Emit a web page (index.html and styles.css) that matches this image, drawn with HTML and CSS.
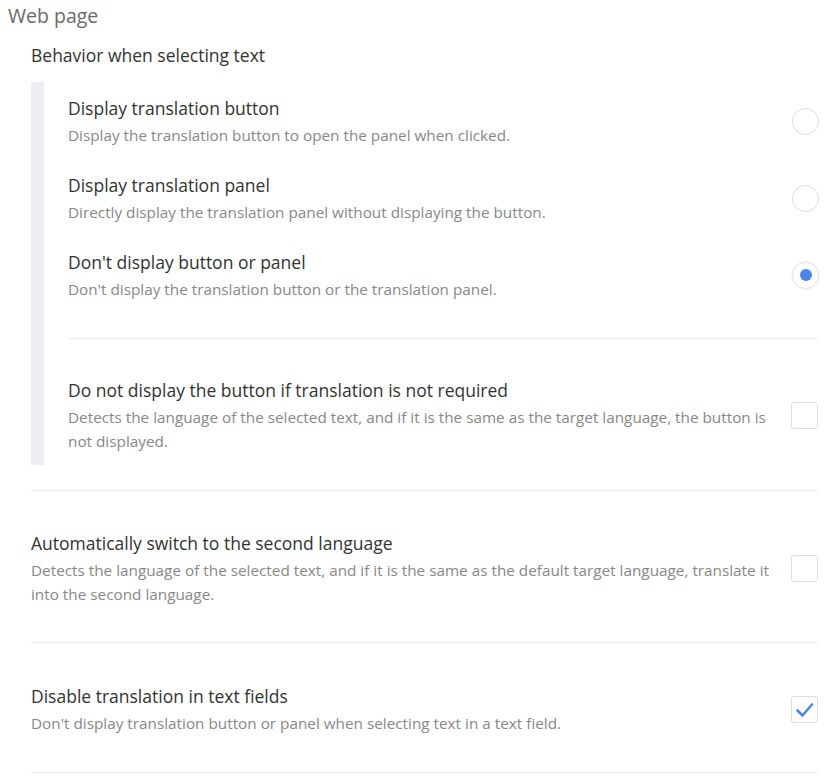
FILE: index.html
```html
<!DOCTYPE html>
<html>
<head>
<meta charset="utf-8">
<link rel="stylesheet" href="styles.css">
</head>
<body>
<div class="page">
  <h2 class="page-title">Web page</h2>
  <div class="group">
    <div class="group-title">Behavior when selecting text</div>
    <div class="sub">
      <div class="item">
        <div class="text">
          <div class="title">Display translation button</div>
          <div class="desc">Display the translation button to open the panel when clicked.</div>
        </div>
        <span class="radio"></span>
      </div>
      <div class="item">
        <div class="text">
          <div class="title">Display translation panel</div>
          <div class="desc">Directly display the translation panel without displaying the button.</div>
        </div>
        <span class="radio"></span>
      </div>
      <div class="item">
        <div class="text">
          <div class="title">Don't display button or panel</div>
          <div class="desc">Don't display the translation button or the translation panel.</div>
        </div>
        <span class="radio checked"></span>
      </div>
      <hr class="divider sub-divider">
      <div class="item item-check">
        <div class="text">
          <div class="title">Do not display the button if translation is not required</div>
          <div class="desc">Detects the language of the selected text, and if it is the same as the target language, the button is not displayed.</div>
        </div>
        <span class="checkbox"></span>
      </div>
    </div>
    <hr class="divider first">
    <div class="item row">
      <div class="text">
        <div class="title">Automatically switch to the second language</div>
        <div class="desc">Detects the language of the selected text, and if it is the same as the default target language, translate it into the second language.</div>
      </div>
      <span class="checkbox"></span>
    </div>
    <hr class="divider">
    <div class="item row last">
      <div class="text">
        <div class="title">Disable translation in text fields</div>
        <div class="desc">Don't display translation button or panel when selecting text in a text field.</div>
      </div>
      <span class="checkbox checked">
        <svg viewBox="0 0 27 27" width="27" height="27"><path d="M6.5 14.5 L11.5 19.5 L21 8.5" fill="none" stroke="#4a86e8" stroke-width="2.6" stroke-linecap="round" stroke-linejoin="round"/></svg>
      </span>
    </div>
    <hr class="divider">
  </div>
</div>
</body>
</html>
```

FILE: styles.css
```css
* { box-sizing: border-box; }
body {
  margin: 0;
  background: #fff;
  font-family: "Open Sans", "Noto Sans", sans-serif;
  color: #333;
}
.page {
  padding: 3px 22px 0 8px;
}
.page-title {
  margin: 0;
  font-size: 19.5px;
  font-weight: 400;
  line-height: 26px;
  color: #6a6a6a;
}
.group {
  margin-left: 23px;
}
.group-title {
  margin-top: 13px;
  font-size: 17.5px;
  line-height: 26px;
  color: #333;
}
.sub {
  margin-top: 14px;
  border-left: 13px solid #ededf3;
  padding-left: 24px;
  padding-bottom: 12px;
}
.item {
  display: flex;
  align-items: center;
  justify-content: space-between;
  padding: 13px 0 12px;
  gap: 16px;
}
.text { flex: 1; min-width: 0; }
.title {
  font-size: 17.5px;
  line-height: 26px;
  color: #333;
}
.desc {
  margin-top: 2px;
  font-size: 15.3px;
  line-height: 24px;
  color: #888;
}
.radio {
  flex: none;
  width: 27px;
  height: 27px;
  border-radius: 50%;
  border: 1px solid #dcdcdc;
  margin-right: -1px;
  display: flex;
  align-items: center;
  justify-content: center;
}
.radio.checked {
  border-color: #e2e2e2;
  box-shadow: 0 0 0 1px #f3f3f3;
}
.radio.checked::after {
  content: "";
  width: 12px;
  height: 12px;
  border-radius: 50%;
  background: #4a86e8;
}
.checkbox {
  flex: none;
  width: 27px;
  height: 27px;
  border: 1px solid #dedede;
  border-radius: 3px;
  display: block;
}
.checkbox svg { display: block; margin: -1px; }
.divider {
  border: none;
  border-top: 1px solid #ececec;
  margin: 0;
}
.sub-divider {
  margin-top: 25px;
  margin-bottom: 26px;
}
.item-check { padding-top: 12px; padding-bottom: 0; }
.first { margin-top: 25px; }
.row { padding: 39px 0 36px; }
.row.last { padding-top: 40px; padding-bottom: 37px; }
```
